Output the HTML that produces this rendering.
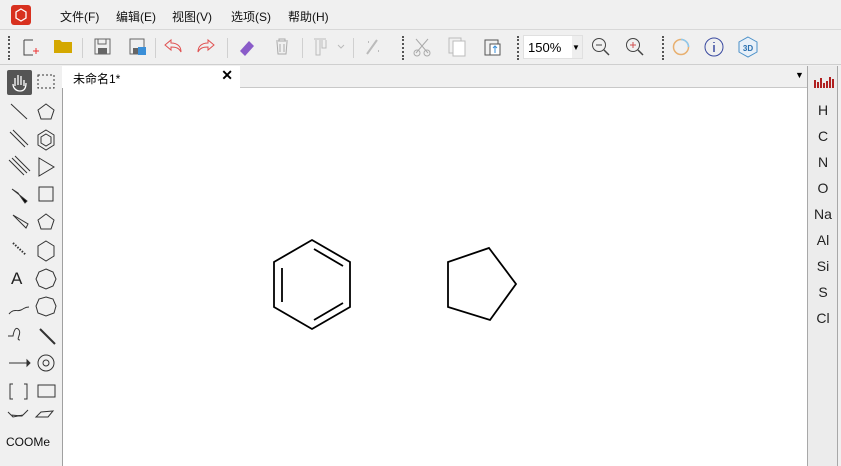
<!DOCTYPE html>
<html><head><meta charset="utf-8"><style>
*{margin:0;padding:0;box-sizing:border-box}
body{width:841px;height:466px;overflow:hidden;background:#f0f0f0;font-family:"Liberation Sans","Noto Sans CJK SC",sans-serif;position:relative}
.abs{position:absolute}
.menu{top:0;left:0;width:841px;height:30px;background:#f0f0f0;border-bottom:1px solid #d8d8d8}
.menu span{position:absolute;top:8px;font-size:12px;color:#111}
.tb{top:30px;left:0;width:841px;height:35px;background:#f0f0f0;border-bottom:1px solid #cfcfcf}
.sep{position:absolute;top:8px;width:1px;height:20px;background:#d0d0d0}
.dots{position:absolute;top:6px;width:2px;height:24px;border-left:2px dotted #555}
.canvas{left:62px;top:88px;width:745px;height:378px;background:#fff;border-left:1px solid #a0a0a0}
.tabbar{left:62px;top:66px;width:745px;height:22px;background:#f0f0f0;border-bottom:1px solid #c8c8c8}
.tab{left:62px;top:66px;width:178px;height:23px;background:#fff;font-size:12px;padding:4px 0 0 11px}
.rp{left:807px;top:66px;width:31px;height:400px;background:#ececec;border-left:1px solid #a8a8a8;border-right:1px solid #a8a8a8}
.rp div{position:absolute;width:30px;text-align:center;font-size:14px;color:#222}
.lt svg{position:absolute}
</style></head><body>
<div class="abs menu">
 <div class="abs" style="left:11px;top:5px;width:20px;height:20px;background:#d8311f;border-radius:3px"><svg width="20" height="20"><polygon points="10,4 15,7 15,13 10,16 5,13 5,7" fill="none" stroke="#fff" stroke-width="1.3"/></svg></div>
 <span style="left:60px">文件(F)</span><span style="left:116px">编辑(E)</span><span style="left:172px">视图(V)</span><span style="left:231px">选项(S)</span><span style="left:288px">帮助(H)</span>
</div>
<div class="abs tb">
 <div class="dots" style="left:8px"></div>
 <svg class="abs" style="left:20px;top:6px" width="20" height="22"><path d="M4 4h9l0 0v0M4 4v15h9" fill="none" stroke="#444"/><path d="M13 15h6M16 12v6" stroke="#e33"/></svg>
 <svg class="abs" style="left:53px;top:8px" width="20" height="16"><path d="M1 2h6l2 2h10v11H1z" fill="#d4a800"/></svg>
 <div class="sep" style="left:82px"></div>
 <svg class="abs" style="left:94px;top:8px" width="18" height="18"><rect x="1" y="1" width="15" height="15" fill="none" stroke="#666"/><rect x="4" y="1" width="8" height="5" fill="none" stroke="#666"/><rect x="4" y="10" width="9" height="6" fill="#666"/></svg>
 <svg class="abs" style="left:129px;top:8px" width="18" height="18"><rect x="1" y="1" width="14" height="15" fill="none" stroke="#666"/><rect x="4" y="10" width="7" height="6" fill="#666"/><rect x="9" y="9" width="8" height="8" fill="#3a8fd8"/></svg>
 <div class="sep" style="left:155px"></div>
 <svg class="abs" style="left:162px;top:7px" width="22" height="18"><path d="M3 8l6-5v3c6 0 10 3 10 9c-2-4-5-5-10-5v3z" fill="none" stroke="#e05050"/></svg>
 <svg class="abs" style="left:195px;top:7px" width="22" height="18"><path d="M19 8l-6-5v3c-6 0-10 3-10 9c2-4 5-5 10-5v3z" fill="none" stroke="#e05050"/></svg>
 <div class="sep" style="left:227px"></div>
 <svg class="abs" style="left:237px;top:7px" width="20" height="20"><path d="M3 14l9-10 5 5-9 10z" fill="#8a5cc9"/></svg>
 <svg class="abs" style="left:274px;top:8px" width="16" height="18"><path d="M2 3h12M5 3V1h6v2M3 4l1 12h8l1-12M6 6v8M10 6v8" fill="none" stroke="#aaa"/></svg>
 <div class="sep" style="left:302px"></div>
 <svg class="abs" style="left:312px;top:8px" width="34" height="18"><path d="M2 1h12M4 2v15h4V2M10 2v8h4V2M26 7l3 3 3-3" fill="none" stroke="#bbb"/></svg>
 <div class="sep" style="left:353px"></div>
 <svg class="abs" style="left:364px;top:8px" width="20" height="18"><path d="M3 16L13 2M4 4h1M14 13h1" stroke="#bbb" stroke-width="2"/></svg>
 <div class="dots" style="left:402px"></div>
 <svg class="abs" style="left:413px;top:7px" width="20" height="20"><path d="M3 2l12 14M15 2L3 16" stroke="#aaa"/><circle cx="4" cy="16" r="3" fill="none" stroke="#aaa"/><circle cx="14" cy="16" r="3" fill="none" stroke="#aaa"/></svg>
 <svg class="abs" style="left:448px;top:6px" width="20" height="22"><rect x="1" y="2" width="12" height="15" fill="none" stroke="#bbb"/><rect x="5" y="5" width="12" height="15" fill="#fff" stroke="#bbb"/></svg>
 <svg class="abs" style="left:483px;top:7px" width="20" height="20"><rect x="2" y="3" width="13" height="15" fill="none" stroke="#555"/><rect x="7" y="7" width="10" height="11" fill="#fff" stroke="#555"/><path d="M12 9v7M10 11l2-2 2 2" stroke="#3a8fd8" fill="none"/></svg>
 <div class="dots" style="left:517px"></div>
 <div class="abs" style="left:523px;top:5px;width:60px;height:24px;background:#fff;border:1px solid #e0e0e0;font-size:13px;padding:4px 0 0 4px">150%<span style="position:absolute;right:0;top:0;width:10px;height:22px;background:#eee;font-size:8px;padding-top:7px">▼</span></div>
 <svg class="abs" style="left:590px;top:6px" width="22" height="22"><circle cx="9" cy="9" r="6.5" fill="none" stroke="#444"/><path d="M14 14l5 5" stroke="#444" stroke-width="1.5"/><path d="M6 9h6" stroke="#444"/></svg>
 <svg class="abs" style="left:624px;top:6px" width="22" height="22"><circle cx="9" cy="9" r="6.5" fill="none" stroke="#444"/><path d="M14 14l5 5" stroke="#444" stroke-width="1.5"/><path d="M6 9h6M9 6v6" stroke="#d05050"/></svg>
 <div class="dots" style="left:662px"></div>
 <svg class="abs" style="left:671px;top:7px" width="20" height="20"><circle cx="10" cy="10" r="7.5" fill="none" stroke="#e8b070" stroke-width="1.5"/><path d="M10 2.5a7.5 7.5 0 0 1 7.5 7.5" fill="none" stroke="#8cc8f0" stroke-width="1.5"/></svg>
 <svg class="abs" style="left:704px;top:7px" width="20" height="20"><circle cx="10" cy="10" r="9" fill="none" stroke="#3a4aa0"/><path d="M10 5v1M10 8v7" stroke="#3a4aa0" stroke-width="1.5"/></svg>
 <svg class="abs" style="left:737px;top:6px" width="22" height="22"><polygon points="11,1 20,6 20,16 11,21 2,16 2,6" fill="#e8f0f8" stroke="#4a90c8"/><text x="11" y="15" font-size="8" font-weight="bold" fill="#2a70b0" text-anchor="middle" font-family="Liberation Sans">3D</text></svg>
</div>
<div class="abs tabbar"></div>
<div class="abs tab">未命名1*<span style="position:absolute;right:7px;top:1px;font-size:14px;font-weight:bold">✕</span></div>
<div class="abs" style="left:795px;top:70px;font-size:9px">▼</div>
<div class="abs canvas"></div>
<svg class="abs" style="left:0;top:0" width="841" height="466">
 <g fill="none" stroke="#000" stroke-width="1.8">
 <polygon points="312,240 350,262 350,307 312,329 274,307 274,262"/>
 <path d="M282,268V302M314,249L343,266M314,320L343,303"/>
 <polygon points="489,248 516,284 490,320 448,307 448,262"/>
 </g>
</svg>
<div class="abs rp">
 <svg style="position:absolute;left:6px;top:10px" width="20" height="12"><path d="M1 4v8M4 6v6M7 2v10M10 7v5M13 5v7M16 1v11M19 3v9" stroke="#b02020" stroke-width="2"/></svg>
 <div style="top:36px">H</div><div style="top:62px">C</div><div style="top:88px">N</div><div style="top:114px">O</div><div style="top:140px">Na</div><div style="top:166px">Al</div><div style="top:192px">Si</div><div style="top:218px">S</div><div style="top:244px">Cl</div>
</div>
<div class="lt">
 <div class="abs" style="left:7px;top:70px;width:25px;height:25px;background:#555;border-radius:2px"></div>
 <svg style="left:0;top:66px" width="62" height="400" fill="none" stroke="#333">
  <path d="M15 20v-8M18 19v-10M21 19v-9M24 20v-6M13 18c0 4 3 7 7 7s6-3 6-8" stroke="#fff" stroke-width="1.3"/>
  <rect x="38" y="9" width="16" height="13" stroke-dasharray="2 2"/>
  <path d="M11 38l16 15"/><polygon points="46,38 54,44 51,53 41,53 38,44"/>
  <path d="M10 66l15 15M13 64l15 15"/><polygon points="46,64 54,69 54,79 46,84 38,79 38,69"/><polygon points="46,68 51,71 51,77 46,80 41,77 41,71"/>
  <path d="M9 94l15 15M12 92l15 15M15 90l15 15"/><path d="M39 92l15 9-15 9z"/>
  <polygon points="12,123 18,127 25,137 27,135" fill="#000"/><rect x="39" y="121" width="14" height="14"/>
  <path d="M13 149l13 13 2-4z"/><polygon points="46,148 54,154 51,163 41,163 38,154"/>
  <path d="M13 177l13 12" stroke-dasharray="1.5 1.5" stroke-width="2"/><polygon points="46,175 54,180 54,190 46,195 38,190 38,180"/>
  <polygon points="46,203 53,206 56,213 53,220 46,223 39,220 36,213 39,206"/>
  <polygon points="46,231 53,233 56,240 54,247 46,250 38,247 36,240 39,233"/>
  <path d="M9 248c5-6 8-2 12-4s4-3 8-3"/>
  <path d="M8 270h5c1-6 3-10 6-6s-4 10 1 10"/><path d="M40 263l15 15" stroke-width="2"/>
  <path d="M9 297h18"/><polygon points="27,294 30,297 27,300" fill="#333"/>
  <circle cx="46" cy="297" r="8"/><circle cx="46" cy="297" r="3"/>
  <path d="M13 318h-3v15h3M24 318h3v15h-3"/><rect x="38" y="319" width="17" height="12"/>
  <path d="M8 346l5 5 10-2 5-5-6 6-11-1zM36 351l5-5 12-1-5 6z"/>
 </svg>
 <div class="abs" style="left:11px;top:269px;font-size:17px;color:#222">A</div>
 <div class="abs" style="left:6px;top:435px;font-size:12px;color:#111">COOMe</div>
</div>
</body></html>
